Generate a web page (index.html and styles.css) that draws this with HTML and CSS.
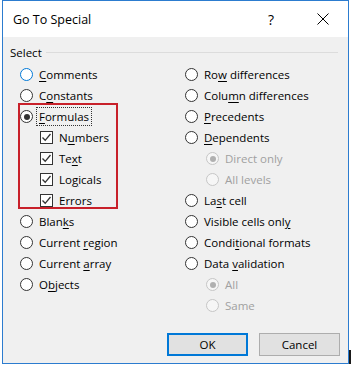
FILE: index.html
```html
<!DOCTYPE html>
<html lang="en">
<head>
    <meta charset="UTF-8">
    <title>Go To Special</title>
    <link rel="stylesheet" href="styles.css">
</head>
<body>
    <div class="dialog">
        <!-- title bar -->
        <div class="titlebar">
            <span class="title">Go To Special</span>
            <span class="help">?</span>
            <svg class="close" width="12" height="12" viewBox="0 0 12 12">
                <path d="M0.5 0.5 L11.5 11.5 M11.5 0.5 L0.5 11.5" stroke="#000" stroke-width="1" fill="none"/>
            </svg>
        </div>

        <div class="content">
            <div class="group-head">
                <span>Select</span>
                <span class="rule"></span>
            </div>

            <div class="options">
                <div class="col">
                    <div class="opt"><span class="radio hover"></span><span><u>C</u>omments</span></div>
                    <div class="opt"><span class="radio"></span><span>C<u>o</u>nstants</span></div>
                    <div class="formulas">
                        <div class="opt"><span class="radio on"></span><span class="focus"><u>F</u>ormulas</span></div>
                        <div class="opt sub"><span class="check"><svg width="11" height="11" viewBox="0 0 11 11"><path d="M1.5 5.5 L4.2 8.3 L9.5 2" stroke="#333" stroke-width="1.3" fill="none"/></svg></span><span>N<u>u</u>mbers</span></div>
                        <div class="opt sub"><span class="check"><svg width="11" height="11" viewBox="0 0 11 11"><path d="M1.5 5.5 L4.2 8.3 L9.5 2" stroke="#333" stroke-width="1.3" fill="none"/></svg></span><span>Te<u>x</u>t</span></div>
                        <div class="opt sub"><span class="check"><svg width="11" height="11" viewBox="0 0 11 11"><path d="M1.5 5.5 L4.2 8.3 L9.5 2" stroke="#333" stroke-width="1.3" fill="none"/></svg></span><span>Lo<u>g</u>icals</span></div>
                        <div class="opt sub"><span class="check"><svg width="11" height="11" viewBox="0 0 11 11"><path d="M1.5 5.5 L4.2 8.3 L9.5 2" stroke="#333" stroke-width="1.3" fill="none"/></svg></span><span><u>E</u>rrors</span></div>
                    </div>
                    <div class="opt"><span class="radio"></span><span>Blan<u>k</u>s</span></div>
                    <div class="opt"><span class="radio"></span><span>Current <u>r</u>egion</span></div>
                    <div class="opt"><span class="radio"></span><span>Current <u>a</u>rray</span></div>
                    <div class="opt"><span class="radio"></span><span>O<u>b</u>jects</span></div>
                </div>

                <div class="col">
                    <div class="opt"><span class="radio"></span><span>Ro<u>w</u> differences</span></div>
                    <div class="opt"><span class="radio"></span><span>Colu<u>m</u>n differences</span></div>
                    <div class="opt"><span class="radio"></span><span><u>P</u>recedents</span></div>
                    <div class="opt"><span class="radio"></span><span><u>D</u>ependents</span></div>
                    <div class="opt sub disabled"><span class="radio on"></span><span>Direct only</span></div>
                    <div class="opt sub disabled"><span class="radio"></span><span>All levels</span></div>
                    <div class="opt"><span class="radio"></span><span>La<u>s</u>t cell</span></div>
                    <div class="opt"><span class="radio"></span><span>Visible cells onl<u>y</u></span></div>
                    <div class="opt"><span class="radio"></span><span>Condi<u>t</u>ional formats</span></div>
                    <div class="opt"><span class="radio"></span><span>Data <u>v</u>alidation</span></div>
                    <div class="opt sub disabled"><span class="radio on"></span><span>All</span></div>
                    <div class="opt sub disabled"><span class="radio"></span><span>Same</span></div>
                </div>
            </div>

            <div class="buttons">
                <button class="btn default">OK</button>
                <button class="btn">Cancel</button>
            </div>
        </div>
    </div>
</body>
</html>
```

FILE: styles.css
```css
body {
    margin: 0;
    background: #fff;
    font-family: "Open Sans", "Noto Sans", sans-serif;
    font-size: 11.5px;
    color: #000;
}

.dialog {
    position: relative;
    margin-left: 2px;
    width: 347px;
    height: 364px;
    box-sizing: border-box;
    border: 1px solid #2c7ccf;
    background: #f0f0f0;
}

/* dark edge of the window behind, visible at the bottom right */
.dialog:after {
    content: "";
    position: absolute;
    left: 346px;
    top: 349px;
    width: 2px;
    height: 20px;
    background: #1a1a1a;
}

/* title bar */
.titlebar {
    display: flex;
    align-items: center;
    height: 36px;
    background: #fff;
    padding-left: 10px;
}

.title {
    font-size: 12.5px;
    flex: 1;
}

.help {
    font-size: 14px;
    width: 8px;
    margin-right: 41px;
}

.close {
    margin-right: 19px;
}

.content {
    padding: 0 8px 0 7px;
}

/* group box header */
.group-head {
    display: flex;
    align-items: center;
    height: 16px;
    margin-top: 7px;
}

.group-head .rule {
    flex: 1;
    height: 1px;
    background: #dcdcdc;
    margin-left: 4px;
    margin-right: 2px;
}

.options {
    display: grid;
    grid-template-columns: 165px 1fr;
    margin-top: 4px;
    padding-left: 10px;
}

.opt {
    display: flex;
    align-items: center;
    height: 21px;
    white-space: nowrap;
}

.opt.sub {
    padding-left: 20px;
}

.col:last-child .opt.sub {
    padding-left: 21px;
}

.opt u {
    text-decoration: underline;
    text-underline-offset: 2px;
}

.disabled {
    color: #a0a0a0;
}

/* radio buttons */
.radio {
    position: relative;
    width: 13px;
    height: 13px;
    box-sizing: border-box;
    border: 1px solid #333;
    border-radius: 50%;
    background: #fff;
    margin-right: 6px;
    flex: none;
}

.radio.hover {
    border-color: #0078d7;
}

.radio.on:after {
    content: "";
    position: absolute;
    left: 2.5px;
    top: 2.5px;
    width: 6px;
    height: 6px;
    border-radius: 50%;
    background: #333;
}

.disabled .radio {
    border-color: #c6c6c6;
    background: #f6f6f6;
}

.disabled .radio.on:after {
    background: #b0b0b0;
}

/* checkboxes */
.check {
    display: flex;
    align-items: center;
    justify-content: center;
    width: 13px;
    height: 13px;
    box-sizing: border-box;
    border: 1px solid #333;
    background: #fff;
    margin-right: 6px;
    flex: none;
}

.formulas {
    position: relative;
}

.formulas:before {
    content: "";
    position: absolute;
    left: -2px;
    top: -3px;
    width: 100px;
    bottom: 2px;
    box-sizing: border-box;
    border: 2px solid #c8202a;
    pointer-events: none;
}

.focus {
    outline: 1px dotted #333;
    outline-offset: 1px;
    padding: 0 1px;
    margin-left: -1px;
}

/* buttons */
.buttons {
    display: flex;
    justify-content: flex-end;
    gap: 11px;
    margin-top: 17px;
}

.btn {
    width: 81px;
    height: 23px;
    box-sizing: border-box;
    background: #e1e1e1;
    border: 1px solid #adadad;
    font-family: inherit;
    font-size: 11.5px;
    color: #000;
    padding: 0;
}

.btn.default {
    border: 2px solid #0078d7;
}
```
